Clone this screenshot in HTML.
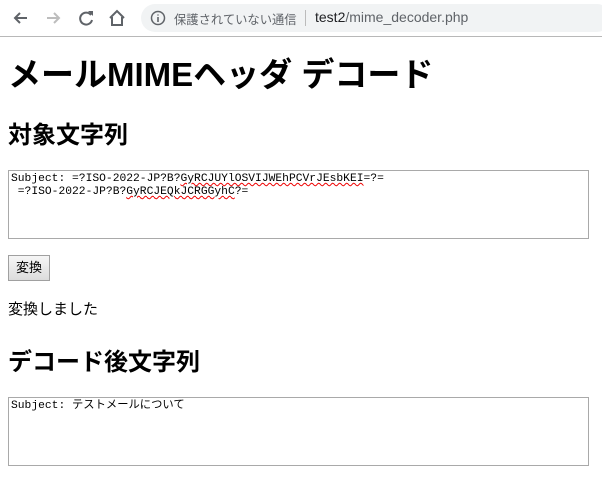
<!DOCTYPE html>
<html><head><meta charset="utf-8"><style>
body{margin:0;width:602px;height:477px;overflow:hidden;background:#fff;font-family:"Liberation Sans","Noto Sans CJK JP",sans-serif;position:relative}
.bar{position:absolute;left:0;top:0;width:602px;height:36px;background:#fff;border-bottom:1px solid #b8b8b8}
.url{position:absolute;left:141px;top:4px;width:470px;height:28px;border-radius:14px;background:#f1f3f4}
.a{position:absolute;color:#000;white-space:nowrap}
h1,h2{margin:0;position:absolute;left:8px;font-weight:bold;white-space:nowrap}
.ta{position:absolute;left:8px;width:581px;border:1px solid #a9a9a9;font-family:"Liberation Mono","Noto Sans CJK JP",monospace;font-size:11.3px;line-height:13px;padding:2px 2px;box-sizing:border-box;white-space:pre;color:#000}
.sq{text-decoration:underline wavy #e00;text-decoration-thickness:1px}
</style></head><body>
<div class="bar">
<svg style="position:absolute;left:11px;top:9px" width="20" height="18"><path d="M16 9H4M9 4L4 9L9 14" stroke="#5f6368" stroke-width="2" fill="none"/></svg>
<svg style="position:absolute;left:44px;top:9px" width="20" height="18"><path d="M3 9H15M10 4L15 9L10 14" stroke="#bdbdbd" stroke-width="2" fill="none"/></svg>
<svg style="position:absolute;left:77px;top:9px" width="20" height="18"><path d="M14 6A6 6 0 1 0 15 11" stroke="#5f6368" stroke-width="2" fill="none"/><path d="M11 2L16 2L16 7Z" fill="#5f6368"/></svg>
<svg style="position:absolute;left:107px;top:8px" width="20" height="20"><path d="M3 10L10 3L17 10M5 9V17H15V9" stroke="#5f6368" stroke-width="2" fill="none"/></svg>
<div class="url"></div>
<svg style="position:absolute;left:150px;top:10px" width="16" height="16"><circle cx="8" cy="8" r="6.5" stroke="#5f6368" stroke-width="1.5" fill="none"/><path d="M8 7V12M8 4.5V5.5" stroke="#5f6368" stroke-width="1.6"/></svg>
<div class="a" style="left:174px;top:10px;font-size:12.3px;color:#5f6368">保護されていない通信</div>
<div class="a" style="left:305px;top:10px;width:1px;height:16px;background:#bbb"></div>
<div class="a" style="left:315px;top:9px;font-size:14px;color:#202124">test2<span style="color:#5f6368">/mime_decoder.php</span></div>
</div>
<h1 style="top:48px;font-size:33px">メールMIMEヘッダ デコード</h1>
<h2 style="top:115px;font-size:24px">対象文字列</h2>
<div class="ta" style="top:170px;height:69px">Subject: =?ISO-2022-JP?B?<span class="sq">GyRCJUYlOSVIJWEhPCVrJEsbKEI</span>=?=
 =?ISO-2022-JP?B?<span class="sq">GyRCJEQkJCRGGyhC</span>?=</div>
<div class="a" style="left:8px;top:255px;width:42px;height:26px;border:1px solid #a0a0a0;box-sizing:border-box;background:linear-gradient(#f6f6f6,#dcdcdc);font-size:13px;text-align:center;line-height:24px">変換</div>
<div class="a" style="left:8px;top:298px;font-size:15px">変換しました</div>
<h2 style="top:342px;font-size:24px">デコード後文字列</h2>
<div class="ta" style="top:397px;height:69px">Subject: テストメールについて</div>
</body></html>
